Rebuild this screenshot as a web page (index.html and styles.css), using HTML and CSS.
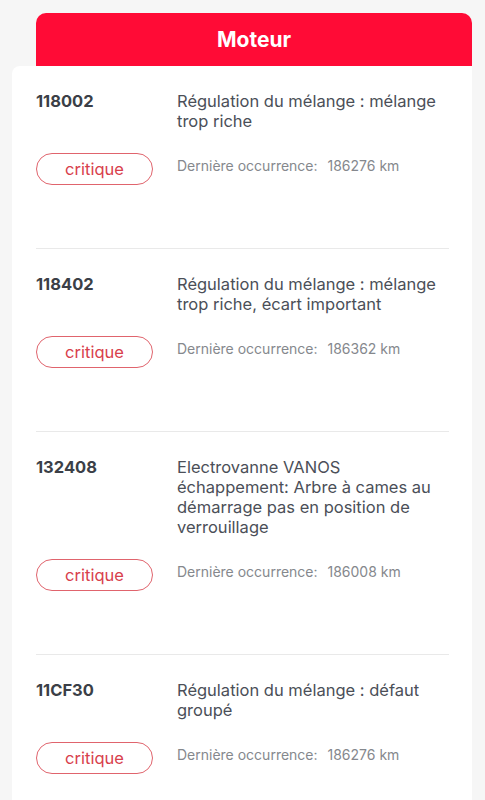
FILE: index.html
```html
<!DOCTYPE html>
<html lang="fr">
<head>
  <meta charset="UTF-8" />
  <meta name="viewport" content="width=device-width, initial-scale=1.0" />
  <title>Défauts - Moteur</title>
  <link rel="stylesheet" href="styles.css">
</head>
<body>
  <div class="page">
    <!-- Section title tab -->
    <div class="section-title">Moteur</div>

    <div class="fault-list">
      <div class="fault">
        <div class="fault-code">118002</div>
        <div class="fault-desc">Régulation du mélange : mélange trop riche</div>
        <div><span class="badge">critique</span></div>
        <div class="fault-meta">Dernière occurrence: <span class="km">186276 km</span></div>
      </div>

      <div class="fault">
        <div class="fault-code">118402</div>
        <div class="fault-desc">Régulation du mélange : mélange trop riche, écart important</div>
        <div><span class="badge">critique</span></div>
        <div class="fault-meta">Dernière occurrence: <span class="km">186362 km</span></div>
      </div>

      <div class="fault">
        <div class="fault-code">132408</div>
        <div class="fault-desc">Electrovanne VANOS échappement: Arbre à cames au démarrage pas en position de verrouillage</div>
        <div><span class="badge">critique</span></div>
        <div class="fault-meta">Dernière occurrence: <span class="km">186008 km</span></div>
      </div>

      <div class="fault">
        <div class="fault-code">11CF30</div>
        <div class="fault-desc">Régulation du mélange : défaut groupé</div>
        <div><span class="badge">critique</span></div>
        <div class="fault-meta">Dernière occurrence: <span class="km">186276 km</span></div>
      </div>
    </div>
  </div>
</body>
</html>
```

FILE: styles.css
```css
body {
  margin: 0;
  background: #f6f6f6;
  font-family: Inter, "Noto Sans", sans-serif;
  color: #454a53;
}

.page {
  padding: 13px 13px 0 12px;
}

.section-title {
  margin-left: 24px;
  height: 53px;
  display: flex;
  align-items: center;
  justify-content: center;
  background: #ff0b36;
  color: #ffffff;
  font-size: 21px;
  font-weight: 700;
  border-radius: 10px 10px 0 0;
}

.fault-list {
  background: #ffffff;
  border-radius: 8px 0 0 0;
  padding: 0 23px 0 24px;
}

.fault {
  display: grid;
  grid-template-columns: 141px 1fr;
  row-gap: 22px;
  padding: 25px 0 63px;
  border-bottom: 1px solid #e9e9e9;
}

.fault:last-child {
  border-bottom: none;
}

.fault-code {
  font-size: 16.5px;
  line-height: 20px;
  font-weight: 700;
  color: #3b3f47;
}

.fault-desc {
  max-width: 264px;
  font-size: 16.5px;
  line-height: 20px;
  color: #4b4f58;
}

.badge {
  display: flex;
  align-items: center;
  justify-content: center;
  width: 115px;
  height: 30px;
  border: 1px solid #e0646d;
  border-radius: 16px;
  color: #d8404c;
  font-size: 16.5px;
}

.fault-meta {
  padding-top: 3px;
  font-size: 14px;
  line-height: 20px;
  color: #85888d;
}

.fault-meta .km {
  margin-left: 6px;
}
```
